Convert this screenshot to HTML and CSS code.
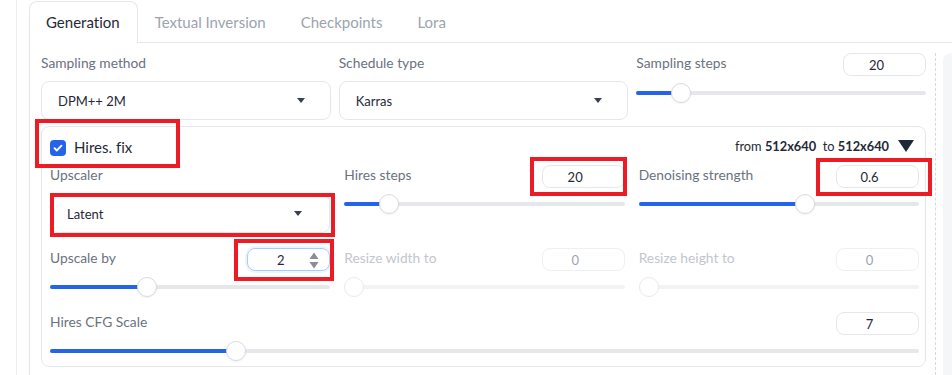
FILE: index.html
```html
<!DOCTYPE html>
<html lang="en">
<head>
    <meta charset="UTF-8">
    <meta name="viewport" content="width=device-width, initial-scale=1.0">
    <title>txt2img - Generation</title>
    <link rel="stylesheet" href="styles.css">
</head>
<body>
    <div class="app">
        <div class="shell">
            <div class="tab-nav">
                <button class="tab active">Generation</button>
                <button class="tab">Textual Inversion</button>
                <button class="tab">Checkpoints</button>
                <button class="tab">Lora</button>
            </div>

            <div class="tab-panel">
                <div class="main-col">
                    <div class="top-row">
                        <div class="field">
                            <div class="field-head"><span class="label">Sampling method</span></div>
                            <div class="dropdown"><span>DPM++ 2M</span><span class="caret"></span></div>
                        </div>
                        <div class="field">
                            <div class="field-head"><span class="label">Schedule type</span></div>
                            <div class="dropdown"><span>Karras</span><span class="caret"></span></div>
                        </div>
                        <div class="slider">
                            <div class="field-head"><span class="label">Sampling steps</span><div class="num">20</div></div>
                            <div class="range top" style="--p: 0.1275"><div class="track"><div class="fill"></div></div><div class="thumb"></div></div>
                        </div>
                    </div>

                    <div class="hires">
                        <div class="hires-head">
                            <label class="check">
                                <span class="checkbox">
                                    <svg width="16" height="16" viewBox="0 0 16 16"><rect width="16" height="16" rx="4" fill="#2563eb"/><path d="M4.5 8.2l2.3 2.3 4.7-4.8" fill="none" stroke="#fff" stroke-width="1.8" stroke-linecap="round" stroke-linejoin="round"/></svg>
                                </span>
                                Hires. fix
                            </label>
                            <div class="resize-info">
                                <span>from <b>512x640</b>&nbsp; to <b>512x640</b></span>
                                <svg class="toggle" width="16" height="12" viewBox="0 0 16 12"><polygon points="0,0 16,0 8,12" fill="#1f2937"/></svg>
                            </div>
                        </div>

                        <div class="hires-grid">
                            <div class="field">
                                <div class="field-head"><span class="label">Upscaler</span></div>
                                <div class="dropdown inner"><span>Latent</span><span class="caret"></span></div>
                            </div>
                            <div class="slider">
                                <div class="field-head"><span class="label">Hires steps</span><div class="num">20</div></div>
                                <div class="range" style="--p: 0.1333"><div class="track"><div class="fill"></div></div><div class="thumb"></div></div>
                            </div>
                            <div class="slider">
                                <div class="field-head"><span class="label">Denoising strength</span><div class="num">0.6</div></div>
                                <div class="range" style="--p: 0.6"><div class="track"><div class="fill"></div></div><div class="thumb"></div></div>
                            </div>

                            <div class="slider">
                                <div class="field-head">
                                    <span class="label">Upscale by</span>
                                    <div class="num focused">2
                                        <svg class="spinner" width="10" height="17" viewBox="0 0 10 17"><path d="M5 0.5L9.5 7H0.5z M5 16.5L9.5 10H0.5z" fill="#8a8d93"/></svg>
                                    </div>
                                </div>
                                <div class="range" style="--p: 0.3333"><div class="track"><div class="fill"></div></div><div class="thumb"></div></div>
                            </div>
                            <div class="slider disabled">
                                <div class="field-head"><span class="label">Resize width to</span><div class="num">0</div></div>
                                <div class="range" style="--p: 0"><div class="track"><div class="fill"></div></div><div class="thumb"></div></div>
                            </div>
                            <div class="slider disabled">
                                <div class="field-head"><span class="label">Resize height to</span><div class="num">0</div></div>
                                <div class="range" style="--p: 0"><div class="track"><div class="fill"></div></div><div class="thumb"></div></div>
                            </div>

                            <div class="slider wide">
                                <div class="field-head"><span class="label">Hires CFG Scale</span><div class="num">7</div></div>
                                <div class="range" style="--p: 0.2069"><div class="track"><div class="fill"></div></div><div class="thumb"></div></div>
                            </div>
                        </div>
                    </div>
                </div>
                <div class="splitter"></div>
                <div class="side-col"></div>
            </div>
        </div>
    </div>

    <!-- red highlight boxes drawn over the screenshot -->
    <div class="mark mark-hires"></div>
    <div class="mark mark-upscaler"></div>
    <div class="mark mark-steps"></div>
    <div class="mark mark-denoise"></div>
    <div class="mark mark-scale"></div>
</body>
</html>
```

FILE: styles.css
```css
:root {
    --blue: #2563eb;
    --border: #e5e7eb;
    --text: #1f2937;
    --label: #6b7280;
    --muted: #9ca3af;
    --mark: #ed1c24;
}

* {
    margin: 0;
    padding: 0;
    box-sizing: border-box;
}

body {
    font-family: Lato, 'Noto Sans', sans-serif;
    font-variant-ligatures: none;
    color: var(--text);
    background: #fff;
    width: 952px;
    height: 375px;
    overflow: hidden;
    position: relative;
}

.app {
    display: flex;
    height: 375px;
    padding-left: 16px;
}

.shell {
    flex: 1;
    border-left: 1px solid #eceef1;
    padding-left: 12px;
}

/* tabs */
.tab-nav {
    display: flex;
    padding-top: 1px;
    height: 43px;
    border-bottom: 1px solid var(--border);
}

.tab {
    font: inherit;
    font-size: 15px;
    color: var(--muted);
    background: none;
    border: 1px solid transparent;
    border-bottom: none;
    padding: 0 17px 2px 16px;
    height: 42px;
    cursor: pointer;
}

.tab.active {
    color: var(--text);
    background: #fff;
    border-color: var(--border);
    border-radius: 8px 8px 0 0;
}

.tab-panel {
    display: flex;
    border-left: 1px solid var(--border);
    padding: 10px 0 0 11px;
    height: 332px;
}

.main-col {
    width: 885px;
    flex-shrink: 0;
}

.splitter {
    margin-left: 9px;
    border-left: 1px dashed #d6d9de;
}

.side-col {
    flex: 1;
    margin-left: 7px;
    background: #f5f6f8;
    border-radius: 8px 0 0 0;
}

.top-row {
    display: grid;
    grid-template-columns: repeat(3, 1fr);
    column-gap: 8px;
}

/* fields */
.field-head {
    display: flex;
    justify-content: space-between;
    align-items: center;
    height: 23px;
}

.label {
    font-size: 13.8px;
    color: var(--label);
    padding-bottom: 4px;
}

.dropdown {
    margin-top: 5px;
    height: 39px;
    border: 1px solid var(--border);
    border-radius: 8px;
    padding: 0 25px 0 16px;
    display: flex;
    justify-content: space-between;
    align-items: center;
    font-size: 13px;
    color: var(--text);
}

.dropdown.inner {
    margin-top: 6px;
    padding-right: 27px;
}

.caret {
    width: 0;
    height: 0;
    border-left: 4px solid transparent;
    border-right: 4px solid transparent;
    border-top: 5px solid #374151;
}

.num {
    position: relative;
    width: 83px;
    height: 23px;
    border: 1px solid var(--border);
    border-radius: 8px;
    padding-right: 16px;
    display: flex;
    align-items: center;
    justify-content: center;
    font-size: 13px;
    color: var(--text);
}

.num.focused {
    border-color: #a9cbfb;
    box-shadow: 0 0 0 2px #eef4fe;
}

.spinner {
    position: absolute;
    right: 10px;
    top: 3px;
}

/* sliders */
.range {
    position: relative;
    height: 20px;
    margin-top: 6px;
    display: flex;
    align-items: center;
}

.range.top {
    margin-top: 7px;
}

.track {
    flex: 1;
    height: 4px;
    border-radius: 2px;
    background: var(--border);
}

.fill {
    height: 100%;
    width: calc((100% - 20px) * var(--p) + 10px);
    background: var(--blue);
    border-radius: 2px;
}

.thumb {
    position: absolute;
    top: 0;
    left: calc((100% - 20px) * var(--p));
    width: 20px;
    height: 20px;
    border-radius: 50%;
    background: #fff;
    border: 1px solid #d8dbe0;
    box-shadow: 0 1px 2px rgba(0, 0, 0, 0.06);
}

.slider.disabled .label {
    color: #c3c6cc;
}

.slider.disabled .num {
    color: var(--muted);
    border-color: #eef0f2;
}

.slider.disabled .track {
    background: #f2f3f5;
}

.slider.disabled .fill {
    background: transparent;
}

.slider.disabled .thumb {
    border-color: #e8eaed;
    box-shadow: none;
}

/* hires fix block */
.hires {
    margin-top: 6px;
    border: 1px solid var(--border);
    border-radius: 8px;
    padding: 13px 6px 5px 8px;
}

.hires-head {
    display: flex;
    justify-content: space-between;
    align-items: center;
    height: 16px;
}

.check {
    display: flex;
    align-items: center;
    gap: 8px;
    font-size: 15px;
    color: var(--text);
    margin-top: -2px;
}

.checkbox {
    display: flex;
    margin-top: 2px;
}

.resize-info {
    display: flex;
    align-items: center;
    gap: 9px;
    font-size: 12.8px;
    color: var(--text);
    margin-top: -4px;
    padding-right: 5px;
}

.hires-grid {
    margin-top: 9px;
    display: grid;
    grid-template-columns: repeat(3, 1fr);
    column-gap: 14px;
    row-gap: 15px;
}

.slider.wide {
    grid-column: 1 / -1;
}

/* annotation boxes */
.mark {
    position: absolute;
    border: 4px solid var(--mark);
}

.mark-hires {
    left: 35px;
    top: 119px;
    width: 145px;
    height: 49px;
}

.mark-upscaler {
    left: 50px;
    top: 193px;
    width: 285px;
    height: 44px;
}

.mark-steps {
    left: 530px;
    top: 157px;
    width: 97px;
    height: 39px;
}

.mark-denoise {
    left: 816px;
    top: 158px;
    width: 116px;
    height: 38px;
}

.mark-scale {
    left: 234px;
    top: 239px;
    width: 100px;
    height: 42px;
}
```
